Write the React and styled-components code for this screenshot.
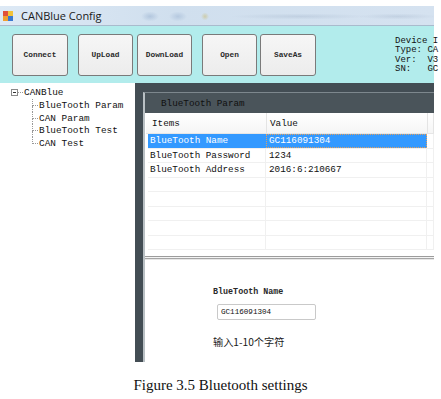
import React from "react";
import styled, { createGlobalStyle } from "styled-components";

const GlobalStyle = createGlobalStyle`
  html, body {
    margin: 0;
    padding: 0;
    background: #ffffff;
  }
  body {
    width: 441px;
    height: 399px;
    overflow: hidden;
  }
`;

const mono = `"Liberation Mono", "DejaVu Sans Mono", "Noto Sans CJK SC", monospace`;

const Page = styled.div`
  display: flex;
  flex-direction: column;
  width: 441px;
  padding-top: 6px;
`;

const Window = styled.div`
  display: flex;
  flex-direction: column;
  width: 434px;
`;

const TitleBar = styled.div`
  display: flex;
  align-items: center;
  gap: 8px;
  height: 19px;
  padding-left: 3px;
  border-bottom: 1px solid #a9bbcd;
  background:
    radial-gradient(ellipse 9px 5px at 150px 55%, rgba(120, 150, 190, 0.35), transparent),
    radial-gradient(ellipse 9px 5px at 178px 55%, rgba(120, 150, 190, 0.3), transparent),
    radial-gradient(ellipse 4px 4px at 205px 55%, rgba(200, 180, 90, 0.45), transparent),
    radial-gradient(ellipse 70px 3px at 300px 55%, rgba(140, 160, 185, 0.25), transparent),
    radial-gradient(ellipse 40px 3px at 398px 55%, rgba(140, 160, 185, 0.25), transparent),
    linear-gradient(to right, #dde9f5, #d0dfee 40%, #d5e2f0);
`;

const TitleText = styled.span`
  font-family: "Open Sans", "Noto Sans", sans-serif;
  font-size: 11px;
  color: #1a1a1a;
`;

const Toolbar = styled.div`
  display: flex;
  align-items: flex-start;
  height: 57px;
  padding: 8px 0 0 12px;
  box-sizing: border-box;
  background: #b2ecec;
`;

const ToolButton = styled.button`
  flex-shrink: 0;
  width: ${(p) => p.$w}px;
  height: 42px;
  margin-left: ${(p) => p.$gap}px;
  padding: 0;
  border: 1px solid #7a7a7a;
  border-radius: 3px;
  background: linear-gradient(#f6f6f6, #ececec);
  font-family: ${mono};
  font-size: 7.8px;
  font-weight: bold;
  color: #2a2a2a;
  cursor: pointer;
`;

const DeviceInfo = styled.div`
  flex-shrink: 0;
  margin-left: 79px;
  margin-top: 3px;
  width: 39px;
  white-space: pre;
  font-family: ${mono};
  font-size: 9px;
  line-height: 9.4px;
  color: #111;
`;

const Body = styled.div`
  display: flex;
  height: 279px;
`;

const TreePanel = styled.div`
  width: 135px;
  padding: 3px 0 0 11px;
  box-sizing: border-box;
  background: #fff;
  font-family: ${mono};
  font-size: 9.4px;
  color: #111;
`;

const TreeRow = styled.div`
  display: flex;
  align-items: center;
  height: 13px;
`;

const Expander = styled.span`
  display: flex;
  align-items: center;
  justify-content: center;
  width: 5px;
  height: 5px;
  border: 1px solid #8a8a8a;
  &::after {
    content: "";
    width: 3px;
    height: 1px;
    background: #333;
  }
`;

const Stub = styled.span`
  width: 5px;
  border-bottom: 1px dotted #999;
  margin-right: 1px;
`;

const Children = styled.div`
  display: flex;
  flex-direction: column;
  padding-left: 21px;
`;

const ChildRow = styled.div`
  display: flex;
  height: 12.7px;
`;

const Branch = styled.span`
  display: flex;
  flex-direction: column;
  width: 6px;
  margin-right: 1px;
`;

const BranchTop = styled.span`
  flex: 1;
  border-left: 1px dotted #999;
  border-bottom: 1px dotted #999;
`;

const BranchBottom = styled.span`
  flex: 1;
  border-left: 1px dotted ${(p) => (p.$last ? "transparent" : "#999")};
`;

const Label = styled.span`
  align-self: center;
  white-space: nowrap;
`;

const Content = styled.div`
  flex: 1;
  display: flex;
  padding: 9px 0 0 8px;
  background: #434d54;
`;

const Inner = styled.div`
  flex: 1;
  display: flex;
  flex-direction: column;
  border-left: 2px solid #b9c0c4;
  border-top: 1px solid #7d878d;
`;

const PanelHeader = styled.div`
  display: flex;
  align-items: center;
  height: 20px;
  padding-left: 16px;
  background: #4a545a;
  font-family: ${mono};
  font-size: 9.3px;
  color: #101010;
`;

const Table = styled.div`
  display: flex;
  flex-direction: column;
  height: 143px;
  overflow: hidden;
  padding-left: 1px;
  background: #fff;
  font-family: ${mono};
  font-size: 9.3px;
  color: #111;
`;

const HeadRow = styled.div`
  display: flex;
  height: 21px;
  flex-shrink: 0;
  background: linear-gradient(#ffffff, #f5f5f5);
  border-bottom: 1px solid #e6e6e6;
  box-sizing: border-box;
`;

const HeadCell = styled.div`
  display: flex;
  align-items: center;
  width: ${(p) => (p.$w ? `${p.$w}px` : "auto")};
  flex: ${(p) => (p.$w ? "none" : 1)};
  padding-left: ${(p) => p.$pad}px;
  box-sizing: border-box;
  border-right: 1px solid #e4e4e4;
`;

const Row = styled.div`
  display: flex;
  height: 14.5px;
  flex-shrink: 0;
  margin-left: 2px;
  border-bottom: 1px solid #f0f0f0;
  box-sizing: border-box;
`;

const Cell = styled.div`
  display: flex;
  align-items: center;
  width: ${(p) => (p.$w ? `${p.$w}px` : "auto")};
  flex: ${(p) => (p.$w ? "none" : 1)};
  padding-left: ${(p) => p.$pad}px;
  box-sizing: border-box;
  white-space: nowrap;
  border-right: 1px solid ${(p) => (p.$sel ? "#3399ff" : "#f0f0f0")};
  background: ${(p) => (p.$sel ? "#3399ff" : "transparent")};
  color: ${(p) => (p.$sel ? "#ffffff" : "#111")};
  outline: ${(p) => (p.$focus ? "1px dotted #e0a060" : "none")};
  outline-offset: -1px;
`;

const Splitter = styled.div`
  height: 4px;
  flex-shrink: 0;
  background: linear-gradient(
    #9c9c9c 0 1px,
    #f4f4f4 1px 2px,
    #a6a6a6 2px 3px,
    #e6e6e6 3px
  );
`;

const Editor = styled.div`
  flex: 1;
  display: flex;
  flex-direction: column;
  align-items: flex-start;
  padding: 27px 0 0 68px;
  background: #fff;
`;

const FieldLabel = styled.div`
  font-family: ${mono};
  font-size: 8.4px;
  line-height: 10px;
  font-weight: bold;
  color: #2a2a2a;
`;

const FieldInput = styled.input`
  width: 99px;
  height: 16px;
  margin: 7px 0 0 4px;
  padding: 0 0 0 3px;
  box-sizing: border-box;
  border: 1px solid #c9c9c9;
  border-radius: 2px;
  font-family: ${mono};
  font-size: 7.6px;
  color: #111;
  outline: none;
`;

const Hint = styled.div`
  margin-top: 15px;
  font-family: "Noto Sans CJK SC", "Noto Sans", sans-serif;
  font-size: 10.2px;
  line-height: 14px;
  color: #1a1a1a;
`;

const Caption = styled.div`
  margin-top: 15px;
  text-align: center;
  font-family: "Liberation Serif", "Times New Roman", serif;
  font-size: 15px;
  line-height: 16px;
  color: #111;
`;

function AppIcon() {
  return (
    <svg width="10" height="10" viewBox="0 0 10 10">
      <rect x="0" y="0" width="5" height="5" fill="#e0503a" />
      <rect x="5" y="0" width="5" height="5" fill="#f2c23a" />
      <rect x="0" y="5" width="5" height="5" fill="#f0a030" />
      <rect x="5" y="5" width="5" height="5" fill="#3a78d0" />
    </svg>
  );
}

const buttons = [
  { label: "Connect", w: 56, gap: 0 },
  { label: "UpLoad", w: 55, gap: 10 },
  { label: "DownLoad", w: 55, gap: 4 },
  { label: "Open", w: 55, gap: 10 },
  { label: "SaveAs", w: 56, gap: 3 },
];

const treeItems = ["BlueTooth Param", "CAN Param", "BlueTooth Test", "CAN Test"];

const rows = [
  ["BlueTooth Name", "GC116091304"],
  ["BlueTooth Password", "1234"],
  ["BlueTooth Address", "2016:6:210667"],
  ["", ""],
  ["", ""],
  ["", ""],
  ["", ""],
  ["", ""],
];

export default function App() {
  return (
    <Page>
      <GlobalStyle />
      <Window>
        <TitleBar>
          <AppIcon />
          <TitleText>CANBlue Config</TitleText>
        </TitleBar>
        <Toolbar>
          {buttons.map((b) => (
            <ToolButton key={b.label} $w={b.w} $gap={b.gap}>
              {b.label}
            </ToolButton>
          ))}
          <DeviceInfo>{"Device I\nType: CA\nVer:  V3\nSN:   GC"}</DeviceInfo>
        </Toolbar>
        <Body>
          <TreePanel>
            <TreeRow>
              <Expander />
              <Stub />
              <Label>CANBlue</Label>
            </TreeRow>
            <Children>
              {treeItems.map((t, i) => (
                <ChildRow key={t}>
                  <Branch>
                    <BranchTop />
                    <BranchBottom $last={i === treeItems.length - 1} />
                  </Branch>
                  <Label>{t}</Label>
                </ChildRow>
              ))}
            </Children>
          </TreePanel>
          <Content>
            <Inner>
              <PanelHeader>BlueTooth Param</PanelHeader>
              <Table>
                <HeadRow>
                  <HeadCell $w={121} $pad={6}>Items</HeadCell>
                  <HeadCell $w={161} $pad={3}>Value</HeadCell>
                  <HeadCell $pad={0} />
                </HeadRow>
                {rows.map((r, i) => (
                  <Row key={i}>
                    <Cell $w={118} $pad={2} $sel={i === 0}>
                      {r[0]}
                    </Cell>
                    <Cell $w={161} $pad={3} $sel={i === 0} $focus={i === 0}>
                      {r[1]}
                    </Cell>
                    <Cell $pad={0} />
                  </Row>
                ))}
              </Table>
              <Splitter />
              <Editor>
                <FieldLabel>BlueTooth Name</FieldLabel>
                <FieldInput defaultValue="GC116091304" />
                <Hint>输入1-10个字符</Hint>
              </Editor>
            </Inner>
          </Content>
        </Body>
      </Window>
      <Caption>Figure 3.5 Bluetooth settings</Caption>
    </Page>
  );
}
